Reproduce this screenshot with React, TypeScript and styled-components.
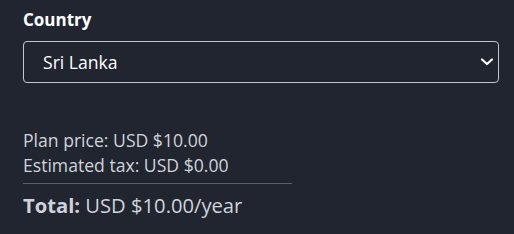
import React from 'react';
import styled, { createGlobalStyle } from 'styled-components';

const GlobalStyle = createGlobalStyle`
  html, body {
    margin: 0;
    padding: 0;
    background-color: #21252f;
  }
  body {
    font-family: "Open Sans", "Noto Sans", sans-serif;
  }
`;

const Wrapper = styled.div`
  width: 514px;
  height: 234px;
  padding: 7px 15px 0 23px;
  box-sizing: border-box;
  background-color: #21252f;
`;

const Label = styled.label`
  display: block;
  color: #ffffff;
  font-size: 17px;
  font-weight: 700;
  line-height: 26px;
  margin-bottom: 8px;
`;

const SelectBox = styled.div`
  width: 476px;
  height: 42px;
  box-sizing: border-box;
  border: 1px solid #c3c6cd;
  border-radius: 4px;
  display: flex;
  align-items: center;
  padding: 0 3px 0 19px;
  color: #ffffff;
  font-size: 17.6px;
`;

const SelectText = styled.span`
  flex: 1;
`;

const Summary = styled.div`
  margin-top: 45px;
  width: 269px;
  color: #cfd3db;
`;

const Line = styled.div`
  font-size: 17.6px;
  line-height: 25px;
`;

const Divider = styled.hr`
  border: none;
  border-top: 1px solid #5a5f6a;
  margin: 5px 0 7px;
`;

const Total = styled.div`
  font-size: 20.2px;
  line-height: 28px;
  b {
    font-weight: 700;
  }
`;

const Chevron = () => (
  <svg width="16" height="10" viewBox="0 0 16 10">
    <path d="M3 2.5l5 4.5 5-4.5" fill="none" stroke="#ffffff" strokeWidth="2.2" strokeLinecap="round" strokeLinejoin="round" />
  </svg>
);

const App = () => {
  return (
    <Wrapper>
      <GlobalStyle />
      <Label>Country</Label>
      <SelectBox>
        <SelectText>Sri Lanka</SelectText>
        <Chevron />
      </SelectBox>
      <Summary>
        <Line>Plan price: USD $10.00</Line>
        <Line>Estimated tax: USD $0.00</Line>
        <Divider />
        <Total><b>Total:</b> USD $10.00/year</Total>
      </Summary>
    </Wrapper>
  );
};

export default App;
